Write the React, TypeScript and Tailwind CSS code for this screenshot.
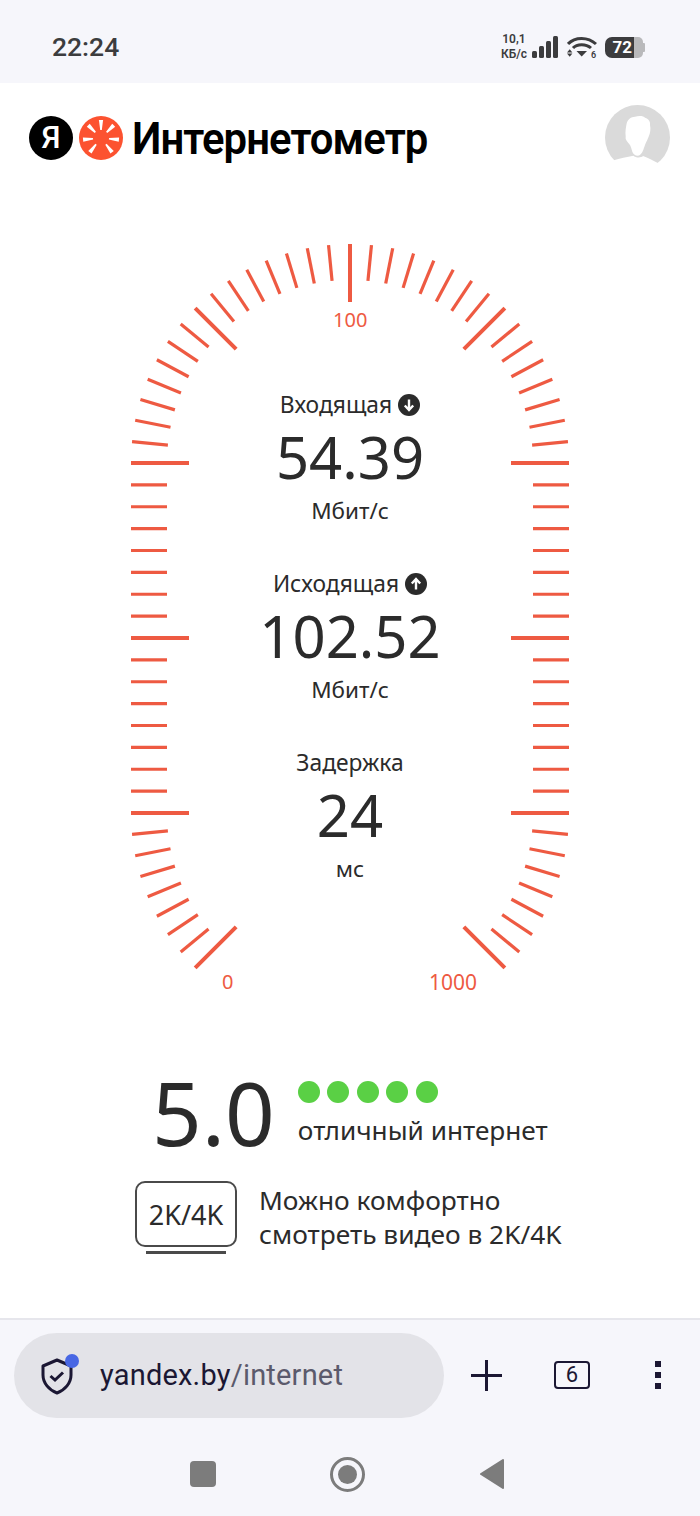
const RED = '#ee5a42'

// stadium outline, relative to the gauge box
const CX = 230
const TOP = 229
const BOTTOM = 579
const R = 219
const STEP = (5.625 * Math.PI) / 180

type Tick = { x1: number; y1: number; x2: number; y2: number; major: boolean }

function radial(cy: number, dx: number, dy: number, major: boolean): Tick {
  const len = major ? 58 : 36
  return {
    x1: CX + dx * R,
    y1: cy + dy * R,
    x2: CX + dx * (R - len),
    y2: cy + dy * (R - len),
    major,
  }
}

function buildTicks(): Tick[] {
  const ticks: Tick[] = []
  // top arc, left side over the top to right side
  for (let i = 0; i <= 32; i++) {
    const a = i * STEP
    ticks.push(radial(TOP, -Math.cos(a), -Math.sin(a), i % 8 === 0))
  }
  // bottom arcs stop at 45 degrees
  for (let i = 1; i <= 8; i++) {
    const a = i * STEP
    ticks.push(radial(BOTTOM, -Math.cos(a), Math.sin(a), i === 8))
    ticks.push(radial(BOTTOM, Math.cos(a), Math.sin(a), i === 8))
  }
  // straight sides
  for (let i = 1; i <= 16; i++) {
    const y = TOP + (i * (BOTTOM - TOP)) / 16
    ticks.push(radial(y, -1, 0, i % 8 === 0))
    ticks.push(radial(y, 1, 0, i % 8 === 0))
  }
  return ticks
}

function StatusIcons() {
  return (
    <div className="flex items-center">
      <div className="flex flex-col items-center text-[#3c3c3e] font-semibold text-[12px] leading-[15px] font-['Roboto',sans-serif] mr-[5px]">
        <span>10,1</span>
        <span>КБ/с</span>
      </div>
      <svg width="27" height="22" viewBox="0 0 27 22" className="mr-[8px]">
        <rect x="0" y="15" width="5" height="7" rx="1.5" fill="#3c3c3e" />
        <rect x="7" y="10" width="5" height="12" rx="1.5" fill="#3c3c3e" />
        <rect x="14" y="5" width="5" height="17" rx="1.5" fill="#3c3c3e" />
        <rect x="21" y="0" width="5" height="22" rx="1.5" fill="#3c3c3e" />
      </svg>
      <svg width="30" height="22" viewBox="0 0 30 22" className="mr-[8px]">
        <path d="M1 8 C8 0.5 21 0.5 29 8" fill="none" stroke="#3c3c3e" strokeWidth="3" />
        <path d="M6 12 C10 7.5 19 7.5 24 12" fill="none" stroke="#3c3c3e" strokeWidth="3" />
        <path d="M9.5 15 L20 15 L14.7 20.5 Z" fill="#3c3c3e" />
        <path d="M0 16.5 L2.7 13.3 L5.4 16.5 Z M0 17.6 L5.4 17.6 L2.7 20.8 Z" fill="#3c3c3e" />
        <text x="26.5" y="21.5" fontSize="9" fontWeight="600" fontFamily="Roboto, sans-serif" fill="#3c3c3e" textAnchor="middle">
          6
        </text>
      </svg>
      <div className="flex items-center">
        <div className="w-[29px] h-[21px] bg-[#3c3c3e] rounded-l-[7px] flex items-center justify-end pr-[2px]">
          <span className="text-white font-bold text-[17px] leading-none font-['Roboto',sans-serif]">72</span>
        </div>
        <div className="w-[9px] h-[21px] bg-[#b9b9bb] rounded-r-[5px]" />
        <div className="w-[2px] h-[9px] bg-[#b9b9bb] rounded-r-[1px]" />
      </div>
    </div>
  )
}

function Logo() {
  return (
    <div className="flex items-center">
      <div className="w-[44px] h-[44px] rounded-full bg-black flex items-center justify-center mr-[6px]">
        <span className="text-white font-medium text-[31px] leading-none font-['Roboto',sans-serif]">Я</span>
      </div>
      <svg width="44" height="44" viewBox="-22 -22 44 44" className="mr-[9px]">
        <circle r="22" fill="#fc5230" />
        {[0, 45, 95, 142, 218, 265, 315].map((a) => (
          <path key={a} d="M-0.8 -8 L0.8 -8 L2.1 -18 L-2.1 -18 Z" fill="white" transform={`rotate(${a})`} />
        ))}
      </svg>
      <span className="text-black font-semibold text-[45px] leading-none tracking-[-1px] origin-left scale-x-[0.93] mt-[1px] font-['Roboto',sans-serif]">
        Интернетометр
      </span>
    </div>
  )
}

function Reading({ label, value, unit, icon }: { label: string; value: string; unit: string; icon?: 'up' | 'down' }) {
  return (
    <div className="flex flex-col items-center h-[179px]">
      <div className="flex items-center gap-[6px] h-[28px] text-[22.8px] leading-none text-[#2b2b2b]">
        <span>{label}</span>
        {icon && (
          <svg width="22" height="22" viewBox="0 0 22 22">
            <circle cx="11" cy="11" r="11" fill="#2b2b2b" />
            <path
              d={icon === 'down' ? 'M11 5.5V15.5M6.8 11.5L11 16L15.2 11.5' : 'M11 16.5V6.5M6.8 10.5L11 6L15.2 10.5'}
              fill="none"
              stroke="white"
              strokeWidth="2.4"
            />
          </svg>
        )}
      </div>
      <div className="h-[70px] flex items-center text-[58px] leading-none text-[#2b2b2b] mt-[3px]">{value}</div>
      <div className="text-[22.5px] leading-none text-[#2b2b2b] mt-[8px]">{unit}</div>
    </div>
  )
}

function Gauge() {
  const ticks = buildTicks()
  return (
    <div className="relative w-[460px] h-[790px] mx-auto mt-[64px]">
      <svg width="460" height="790" viewBox="0 0 460 790" className="absolute inset-0">
        {ticks.map((t, i) => (
          <line key={i} x1={t.x1} y1={t.y1} x2={t.x2} y2={t.y2} stroke={RED} strokeWidth={t.major ? 4 : 3.2} />
        ))}
      </svg>
      <span className="absolute left-[213px] top-[76px] text-[20px] leading-none text-[#ee5a42]">100</span>
      <span className="absolute left-[102px] top-[738px] text-[20px] leading-none text-[#ee5a42]">0</span>
      <span className="absolute left-[309px] top-[738px] text-[21px] leading-none text-[#ee5a42]">1000</span>
      <div className="absolute inset-x-0 top-[157px] flex flex-col items-center">
        <Reading label="Входящая" value="54.39" unit="Мбит/с" icon="down" />
        <Reading label="Исходящая" value="102.52" unit="Мбит/с" icon="up" />
        <Reading label="Задержка" value="24" unit="мс" />
      </div>
    </div>
  )
}

function Rating() {
  return (
    <div className="flex flex-col pl-[135px] mt-[45px]">
      <div className="flex items-center pl-[17px]">
        <span className="text-[87px] leading-none text-[#2b2b2b] mr-[23px]">5.0</span>
        <div className="flex flex-col">
          <div className="flex gap-[7.5px]">
            {[0, 1, 2, 3, 4].map((i) => (
              <span key={i} className="w-[22px] h-[22px] rounded-full bg-[#5ad045]" />
            ))}
          </div>
          <span className="text-[26.2px] leading-none text-[#2b2b2b] mt-[14px]">отличный интернет</span>
        </div>
      </div>
      <div className="flex items-center mt-[25px]">
        <div className="flex flex-col items-center">
          <div className="w-[102px] h-[66px] border-[2.5px] border-[#4a4a4a] rounded-[10px] flex items-center justify-center text-[27px] leading-none text-[#2b2b2b]">
            2K/4K
          </div>
          <div className="w-[80px] h-[2.5px] bg-[#4a4a4a] mt-[4px]" />
        </div>
        <div className="text-[26.3px] leading-[34px] text-[#2b2b2b] ml-[22px]">
          Можно комфортно
          <br />
          смотреть видео в 2K/4K
        </div>
      </div>
    </div>
  )
}

function BrowserBar() {
  return (
    <div className="mt-auto bg-[#f6f6fb] border-t-2 border-[#e6e6ec]">
      <div className="flex items-center h-[112px] pl-[14px] pb-[2px]">
        <div className="w-[430px] h-[85px] rounded-full bg-[#e3e3e8] flex items-center pl-[26px]">
          <svg width="40" height="42" viewBox="0 0 40 42" className="mr-[20px] -mt-[3px]">
            <path
              d="M17 7 L3 13 V22 C3 30 9 37 17 40 C25 37 31 30 31 22 V13 Z"
              fill="none"
              stroke="#1b1733"
              strokeWidth="3"
              strokeLinejoin="round"
            />
            <path d="M10.5 23 L15 27 L23 19.5" fill="none" stroke="#1b1733" strokeWidth="3" />
            <circle cx="32" cy="8" r="7" fill="#4867e4" />
          </svg>
          <span className="text-[29px] leading-none tracking-[0.2px] text-[#1b1733] font-['Roboto',sans-serif]">
            yandex.by<span className="text-[#5b5a6c]">/internet</span>
          </span>
        </div>
        <svg width="31" height="31" viewBox="0 0 31 31" className="ml-[27px]">
          <path d="M0 15.5H31M15.5 0V31" stroke="#1b1733" strokeWidth="3" />
        </svg>
        <div className="w-[36px] h-[28px] ml-[52px] border-[2.5px] border-[#1b1733] rounded-[4px] flex items-center justify-center text-[22px] leading-none text-[#1b1733] font-['Roboto',sans-serif]">
          6
        </div>
        <div className="flex flex-col gap-[5px] ml-[65px]">
          <span className="w-[6px] h-[6px] bg-[#1b1733]" />
          <span className="w-[6px] h-[6px] bg-[#1b1733]" />
          <span className="w-[6px] h-[6px] bg-[#1b1733]" />
        </div>
      </div>
      <div className="flex items-center h-[84px] pl-[190px]">
        <div className="w-[26px] h-[26px] rounded-[4px] bg-[#7c7c7c]" />
        <svg width="35" height="35" viewBox="0 0 35 35" className="ml-[114px]">
          <circle cx="17.5" cy="17.5" r="16" fill="none" stroke="#7c7c7c" strokeWidth="3" />
          <circle cx="17.5" cy="17.5" r="9.5" fill="#7c7c7c" />
        </svg>
        <svg width="24" height="30" viewBox="0 0 24 30" className="ml-[115px]">
          <path d="M23 1 L1 15 L23 29 Z" fill="#7c7c7c" stroke="#7c7c7c" strokeWidth="2" strokeLinejoin="round" />
        </svg>
      </div>
    </div>
  )
}

export default function App() {
  return (
    <div className="w-[700px] h-[1516px] flex flex-col bg-white font-['Noto_Sans',sans-serif]">
      <div className="h-[83px] shrink-0 bg-[#f6f6fb] flex items-center justify-between pl-[52px] pr-[55px] pt-[11px]">
        <span className="text-[#3c3c3e] text-[26.5px] font-medium leading-none font-['Roboto',sans-serif]">22:24</span>
        <StatusIcons />
      </div>
      <div className="flex items-center justify-between pl-[29px] pr-[30px] pt-[22px]">
        <Logo />
        <svg width="65" height="65" viewBox="0 0 65 65">
          <circle cx="32.5" cy="32.5" r="32.5" fill="#dadada" />
          <path
            d="M30 11.7 C34 10.5 39 11 40 12.7 C44 14 45.5 17 45 20 C46 24 45 28 44.3 30 C43 34 41 37 40 40 C39 43 38.5 44 38.3 45 C37 48 35 50.7 33 50.7 C30 50.7 28 49 27.3 46.7 C26.5 44 26 42 25 40 C23 37 20 35 20.7 31.7 C20 27 21 22 21.7 18.3 C23 14 26 12 30 11.7 Z"
            fill="white"
          />
          <path d="M8 55.5 C15 53 22 52 28.3 50.7 C31 53 36 53 38 51 C43 53 48 55.5 53.3 58.3 L54 65 L8 65 Z" fill="white" />
        </svg>
      </div>
      <Gauge />
      <Rating />
      <BrowserBar />
    </div>
  )
}
